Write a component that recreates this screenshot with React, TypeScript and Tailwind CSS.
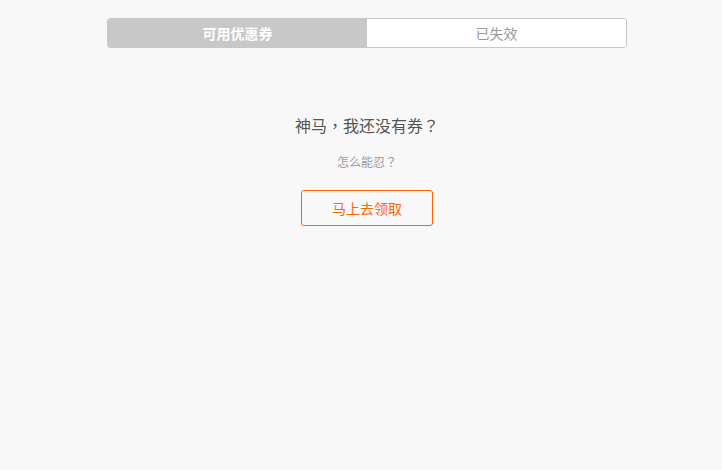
const P = ({ c }: { c: string }) => (
  <span style={{ fontFamily: '"Noto Sans CJK TC", "Noto Sans CJK SC", sans-serif' }}>{c}</span>
);

export default function App() {
  return (
    <div className="min-h-[470px] w-full bg-[#f8f8f8] pt-[18px] [text-spacing-trim:space-all]" style={{ fontFamily: '"Noto Sans CJK SC", "Noto Sans", sans-serif' }}>
      <div className="ml-[107px] w-[520px]">
        <div className="flex h-[30px] w-[520px] overflow-hidden rounded-[3px] border border-[#c8c8c8] text-[14px]">
          <div className="flex w-[259px] items-center justify-center bg-[#c8c8c8] font-bold text-white">可用优惠券</div>
          <div className="flex flex-1 items-center justify-center bg-white text-[#999]">已失效</div>
        </div>
        <div className="flex flex-col items-center pt-[65px]">
          <div className="h-[24px] text-[16px] leading-[24px] text-[#555]">神马<P c="，" />我还没有券<P c="？" /></div>
          <div className="mt-[16px] h-[18px] text-[12px] leading-[18px] text-[#999]">怎么能忍<P c="？" /></div>
          <button className="mt-[19px] flex h-[36px] w-[132px] items-center justify-center rounded-[3px] border border-[#ff6600] text-[14px] text-[#ff6600]">马上去领取</button>
        </div>
      </div>
    </div>
  );
}
